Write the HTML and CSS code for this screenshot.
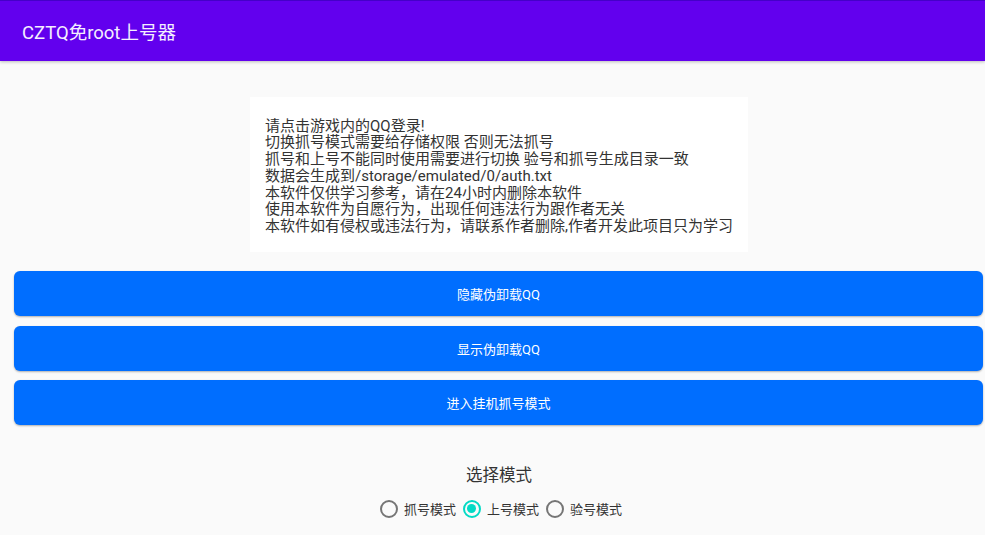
FILE: index.html
```html
<!DOCTYPE html>
<html lang="zh-CN">
<head>
    <meta charset="UTF-8">
    <meta name="viewport" content="width=device-width, initial-scale=1.0">
    <title>CZTQ免root上号器</title>
    <link rel="stylesheet" href="styles.css">
</head>
<body>

    <div class="toolbar">
        <span class="toolbar-title">CZTQ免root上号器</span>
    </div>

    <!-- Notice -->
    <div class="center-col">
        <div class="notice">
            请点击游戏内的QQ登录!<br>
            切换抓号模式需要给存储权限 否则无法抓号<br>
            抓号和上号不能同时使用需要进行切换 验号和抓号生成目录一致<br>
            数据会生成到/storage/emulated/0/auth.txt<br>
            本软件仅供学习参考，请在24小时内删除本软件<br>
            使用本软件为自愿行为，出现任何违法行为跟作者无关<br>
            本软件如有侵权或违法行为，请联系作者删除,作者开发此项目只为学习
        </div>
    </div>

    <!-- Actions -->
    <div class="actions">
        <button class="action-btn">隐藏伪卸载QQ</button>
        <button class="action-btn">显示伪卸载QQ</button>
        <button class="action-btn">进入挂机抓号模式</button>
    </div>

    <!-- Mode -->
    <div class="center-col">
        <div class="mode-title">选择模式</div>
        <div class="radio-group">
            <label class="radio"><span class="radio-dot"></span>抓号模式</label>
            <label class="radio checked"><span class="radio-dot"></span>上号模式</label>
            <label class="radio"><span class="radio-dot"></span>验号模式</label>
        </div>
    </div>

</body>
</html>
```

FILE: styles.css
```css
body {
    margin: 0;
    background-color: #fafafa;
    font-family: Roboto, "Noto Sans CJK SC", sans-serif;
    color: #212121;
}

.toolbar {
    height: 60px;
    border-top: 1px solid #4500c8;
    background-color: #6200ee;
    box-shadow: 0 1px 3px rgba(0, 0, 0, 0.25);
    display: flex;
    align-items: center;
    padding-left: 22px;
}

.toolbar-title {
    color: #f4eeff;
    font-size: 18.5px;
    font-weight: 400;
}

.center-col {
    display: flex;
    flex-direction: column;
    align-items: center;
    padding-left: 13px;
}

.notice {
    margin-top: 36px;
    background: #fff;
    padding: 20.5px 15px 17px;
    font-size: 15px;
    line-height: 16.8px;
    color: #333;
    white-space: nowrap;
}

.actions {
    display: flex;
    flex-direction: column;
    gap: 9.5px;
    margin: 19px 2px 0 14px;
}

.action-btn {
    height: 45px;
    border: none;
    border-radius: 6px;
    background: #006eff;
    color: #fff;
    font-family: inherit;
    font-size: 13px;
    box-shadow: 0 1px 2px rgba(0, 0, 0, 0.3);
}

.mode-title {
    margin-top: 39px;
    font-size: 16.5px;
    line-height: 24px;
    color: #333;
}

.radio-group {
    display: flex;
    align-items: center;
    margin-top: 11px;
    padding-left: 4px;
}

.radio {
    display: flex;
    align-items: center;
    font-size: 13px;
    color: #333;
    margin-left: 7px;
}

.radio:first-child {
    margin-left: 0;
}

.radio-dot {
    width: 14px;
    height: 14px;
    border: 2px solid #757575;
    border-radius: 50%;
    margin-right: 6px;
    position: relative;
}

.radio.checked .radio-dot {
    border-color: #03dac5;
}

.radio.checked .radio-dot::after {
    content: "";
    position: absolute;
    left: 2.5px;
    top: 2.5px;
    width: 9px;
    height: 9px;
    border-radius: 50%;
    background: #03dac5;
}
```
